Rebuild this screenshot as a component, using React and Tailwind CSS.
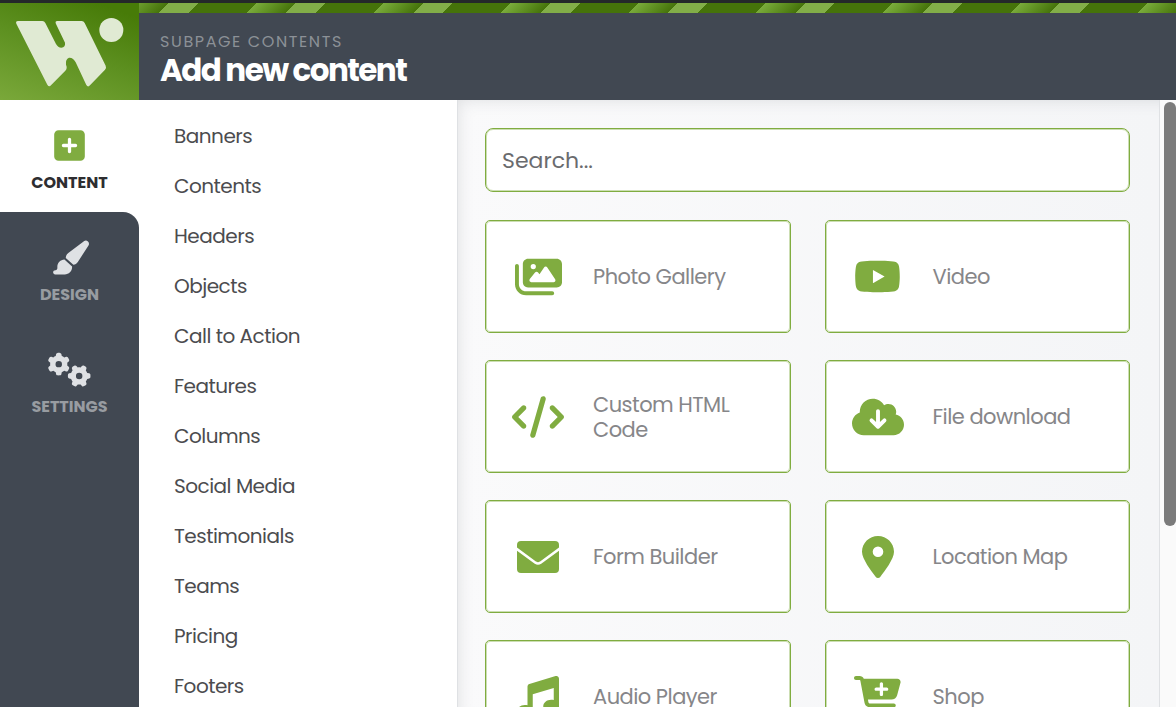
import React, { useState } from "react";
import {
    FaCartPlus,
    FaCloudArrowDown,
    FaCode,
    FaGears,
    FaImages,
    FaMusic,
    FaPaintbrush,
    FaSquarePlus,
    FaYoutube,
} from "react-icons/fa6";

const categories = [
    "Banners",
    "Contents",
    "Headers",
    "Objects",
    "Call to Action",
    "Features",
    "Columns",
    "Social Media",
    "Testimonials",
    "Teams",
    "Pricing",
    "Footers",
];

const Envelope = ({ className }) => (
    <svg viewBox="0 0 42 32" className={className} aria-hidden="true">
        <rect width="42" height="32" rx="4" fill="currentColor" />
        <path d="M-1 7.500 18.500 21.700q2.500 1.700 5 0L43 7.500" fill="none" stroke="#fff" strokeWidth="2.600" />
    </svg>
);

const MapPin = ({ className }) => (
    <svg viewBox="0 0 32 42" className={className} aria-hidden="true">
        <path
            fill="currentColor"
            fillRule="evenodd"
            d="M16 0C7.2 0 0 7 0 15.8 0 23 9.400 35.300 13.600 40.700a3 3 0 0 0 4.800 0C22.600 35.300 32 23 32 15.800 32 7 24.800 0 16 0Zm0 10.500a5.300 5.300 0 1 1 0 10.600 5.300 5.300 0 0 1 0-10.600Z"
        />
    </svg>
);

const widgets = [
    { name: "Photo Gallery", icon: <FaImages className="h-[42px] w-[47px]" /> },
    { name: "Video", icon: <FaYoutube className="size-[47px]" /> },
    { name: "Custom HTML Code", icon: <FaCode className="h-[42px] w-[52px]" /> },
    { name: "File download", icon: <FaCloudArrowDown className="h-[42px] w-[52px]" /> },
    { name: "Form Builder", icon: <Envelope className="h-8 w-[42px]" /> },
    { name: "Location Map", icon: <MapPin className="h-[42px] w-8" /> },
    { name: "Audio Player", icon: <FaMusic className="size-[42px]" /> },
    { name: "Shop", icon: <FaCartPlus className="h-[42px] w-[47px]" /> },
];

const tabs = [
    { name: "Design", icon: <FaPaintbrush className="h-[35px] w-[38px]" /> },
    { name: "Settings", icon: <FaGears className="h-[35px] w-[43px]" /> },
];

const Logo = () => (
    <svg viewBox="0 0 417 291" className="h-[97px] w-[139px]" role="img" aria-label="Logo">
        <g fill="#e0ead3">
            <path d="M54 54H127Q133 54 136 60L168 123Q174 134 184 134 197 132 195 119L168 63Q164 54 172 54H245Q251 54 254 60L317 188Q320 195 315 200L270 247Q264 254 259 246L227 178Q220 163 207 164 196 168 198 185 203 196 196 203L153 247Q147 253 142 245L49 62Q46 54 54 54Z" />
            <circle cx="334" cy="81" r="36" />
        </g>
    </svg>
);

const App = () => {
    const [query, setQuery] = useState("");

    const visible = widgets.filter((w) => w.name.toLowerCase().includes(query.trim().toLowerCase()));

    return (
        <div className="flex h-screen flex-col overflow-hidden border-t-3 border-[#24282a] bg-white font-['Poppins','Inter',sans-serif]">
            <header className="flex shrink-0">
                <a
                    href="#"
                    className="flex w-[139px] shrink-0 bg-[linear-gradient(20deg,#7aa83a_0%,#5d9020_50%,#477b08_90%)]"
                >
                    <Logo />
                </a>
                <div className="flex flex-1 flex-col bg-[#414852]">
                    <div className="h-[10px] bg-[repeating-linear-gradient(135deg,#6c9e2e_0px,#45730a_21px,#82ae48_21px,#82ae48_42px,#45730a_42px,#45730a_83px,#7aab3c_83px,#6c9e2e_90px)]" />
                    <div className="px-[21px] pt-[17px]">
                        <p className="text-base leading-6 tracking-widest text-[#8c9197] uppercase">Subpage contents</p>
                        <h1 className="text-[31px] leading-8 font-bold tracking-tighter text-white">Add new content</h1>
                    </div>
                </div>
            </header>

            <div className="flex min-h-0 flex-1">
                <nav className="flex w-[139px] shrink-0 flex-col">
                    <button
                        type="button"
                        className="flex h-28 shrink-0 flex-col items-center pt-7 text-base font-bold text-[#2d2d30] uppercase"
                    >
                        <FaSquarePlus className="size-[35px] text-[#80ac40]" />
                        <span className="mt-2">Content</span>
                    </button>
                    <div className="flex flex-1 flex-col rounded-tr-2xl bg-[#414852]">
                        {tabs.map((tab) => (
                            <button
                                key={tab.name}
                                type="button"
                                className="flex h-28 flex-col items-center pt-7 text-base font-bold text-[#989ca1] uppercase"
                            >
                                <span className="text-[#dfe1e4]">{tab.icon}</span>
                                <span className="mt-2">{tab.name}</span>
                            </button>
                        ))}
                    </div>
                </nav>

                <ul className="w-[318px] shrink-0 overflow-hidden pt-[11px]">
                    {categories.map((category) => (
                        <li key={category}>
                            <a
                                href="#"
                                className="flex h-[50px] items-center pl-[35px] text-xl tracking-tight text-[#4c4c4f]"
                            >
                                {category}
                            </a>
                        </li>
                    ))}
                </ul>

                <main className="flex-1 overflow-hidden border-r border-l border-[#dfe1e4] bg-linear-to-r from-[#fafafb] to-[#f4f5f7] pt-7 pr-[29px] pl-[27px] shadow-[inset_8px_8px_16px_-8px_rgba(65,72,82,0.15)]">
                    <input
                        type="text"
                        aria-label="Search"
                        placeholder="Search..."
                        value={query}
                        onChange={(e) => setQuery(e.target.value)}
                        className="block h-16 w-full rounded-lg border border-[#80ac40] bg-white px-4 text-[22px] text-[#5f6063] outline-1 -outline-offset-2 outline-[#80ac40]/40 placeholder:text-[#6a6b6e]"
                    />
                    <div className="mt-7 grid grid-cols-2 gap-x-[34px] gap-y-[27px]">
                        {visible.map((widget) => (
                            <button
                                key={widget.name}
                                type="button"
                                className="flex h-[113px] items-center gap-[3px] rounded-[5px] border border-[#80ac40] bg-white pr-7 text-left text-[21px] leading-[25px] tracking-tight text-[#868689] outline-1 -outline-offset-2 outline-[#80ac40]/40"
                            >
                                <span className="flex w-[104px] shrink-0 justify-center text-[#80ac40]">
                                    {widget.icon}
                                </span>
                                <span>{widget.name}</span>
                            </button>
                        ))}
                    </div>
                </main>

                <div className="w-4 shrink-0 bg-[#fafafa] pt-[2px] pl-1" aria-hidden="true">
                    <div className="h-[70%] rounded-full bg-[#7b7b7b]" />
                </div>
            </div>
        </div>
    );
};

export default App;
